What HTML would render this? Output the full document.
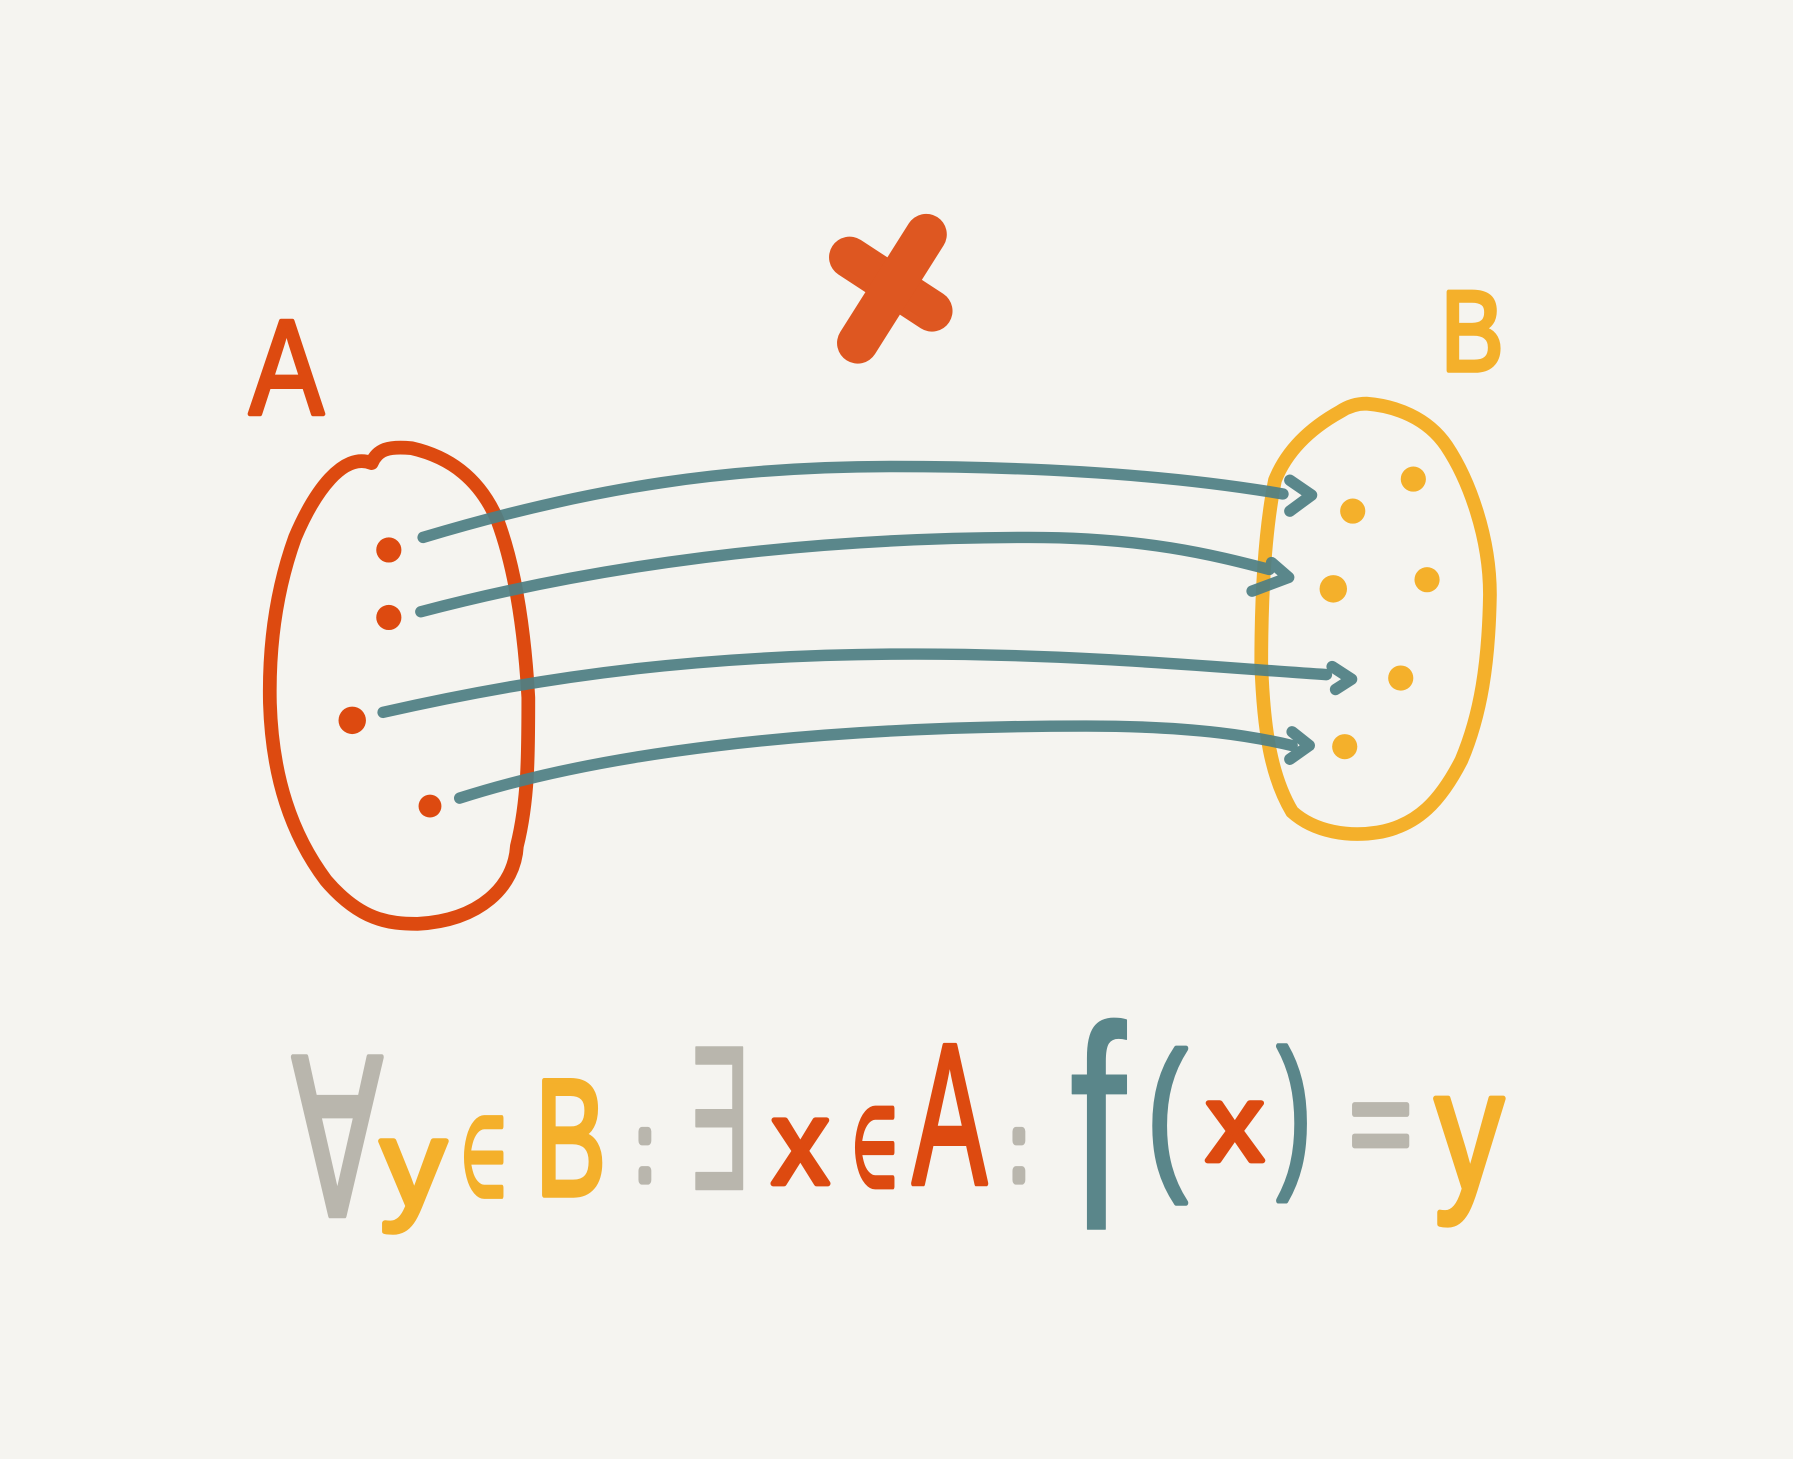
<!DOCTYPE html>
<html><head><meta charset="utf-8"><style>
html,body{margin:0;padding:0;background:#f5f4f0;}
svg{display:block;}
text{font-family:"Liberation Sans",sans-serif;stroke-linejoin:round;}
</style></head><body>
<svg width="1793" height="1459" viewBox="0 0 1568 1276" xmlns="http://www.w3.org/2000/svg">
<rect width="1568" height="1276" fill="#f5f4f0"/>
<g fill="none" stroke-linecap="round" stroke-linejoin="round">
<path d="M325,405 C300,395 275,430 258,470 C240,520 235,570 236,615 C238,680 255,730 285,770 C315,805 340,808 365,808 C420,805 450,775 452,740 C462,700 462,660 462,610 C458,540 448,490 435,455 C420,420 395,400 360,392 C340,390 330,393 325,405 Z" stroke="#dd4a10" stroke-width="12"/>
<path d="M1172,360 C1145,375 1125,395 1115,420 C1105,470 1103,530 1103,580 C1105,640 1112,680 1130,710 C1150,728 1180,732 1205,728 C1240,722 1260,700 1278,665 C1295,625 1302,580 1303,520 C1303,470 1285,420 1265,390 C1248,365 1220,355 1195,353 C1185,353 1178,356 1172,360 Z" stroke="#f4b02b" stroke-width="12"/>
</g>
<g fill="none" stroke="#4f7f84" stroke-width="10" stroke-linecap="round" stroke-linejoin="round" opacity="0.93">
<path d="M370,470 C520,425 640,408 780,408 C930,408 1040,418 1122,432"/>
<path d="M1128,420 L1147,433 L1128,447"/>
<path d="M368,535 C520,495 700,470 900,470 C1000,470 1060,485 1110,498"/>
<path d="M1112,492 L1127,505 L1095,517"/>
<path d="M335,623 C480,590 620,572 800,572 C950,572 1080,585 1160,590"/>
<path d="M1165,583 L1182,594 L1168,603"/>
<path d="M402,698 C520,660 700,635 950,635 C1050,635 1100,645 1130,652"/>
<path d="M1130,640 L1145,652 L1128,664"/>
</g>
<g fill="#dd4a10">
<circle cx="340" cy="481" r="11"/><circle cx="340" cy="540" r="11"/><circle cx="308" cy="630" r="12"/><circle cx="376" cy="705" r="10"/>
</g>
<g fill="#f4b02b">
<circle cx="1183" cy="447" r="11"/><circle cx="1236" cy="419" r="11"/><circle cx="1166" cy="515" r="12"/><circle cx="1248" cy="507" r="11"/><circle cx="1225" cy="593" r="11"/><circle cx="1176" cy="653" r="11"/>
</g>
<g stroke="#dd4a10" stroke-width="36" stroke-linecap="round" opacity="0.92">
<line x1="743" y1="225" x2="815" y2="272"/>
<line x1="810" y1="205" x2="750" y2="300"/>
</g>
<text x="218" y="362" font-size="118" fill="#dd4a10" stroke="#dd4a10" stroke-width="4" textLength="65" lengthAdjust="spacingAndGlyphs">A</text>
<text x="1260" y="324" font-size="100" fill="#f4b02b" stroke="#f4b02b" stroke-width="4" textLength="55" lengthAdjust="spacingAndGlyphs">B</text>
<g stroke-width="5">
<text x="255" y="1063" font-size="190" fill="#b9b6ad" stroke="#b9b6ad" textLength="80" lengthAdjust="spacingAndGlyphs">∀</text>
<text x="333" y="1055" font-size="108" fill="#f4b02b" stroke="#f4b02b" textLength="57" lengthAdjust="spacingAndGlyphs">y</text>
<text x="403" y="1045" font-size="95" fill="#f4b02b" stroke="#f4b02b" textLength="40" lengthAdjust="spacingAndGlyphs">∈</text>
<text x="468" y="1045" font-size="145" fill="#f4b02b" stroke="#f4b02b" textLength="62" lengthAdjust="spacingAndGlyphs">B</text>
<text x="556" y="1032" font-size="80" fill="#b9b6ad" stroke="#b9b6ad" stroke-width="8" textLength="16" lengthAdjust="spacingAndGlyphs">:</text>
<text x="600" y="1040" font-size="170" fill="#b9b6ad" stroke="#b9b6ad" stroke-width="2" textLength="55" lengthAdjust="spacingAndGlyphs">∃</text>
<text x="675" y="1035" font-size="105" fill="#dd4a10" stroke="#dd4a10" textLength="50" lengthAdjust="spacingAndGlyphs">x</text>
<text x="745" y="1037" font-size="95" fill="#dd4a10" stroke="#dd4a10" textLength="40" lengthAdjust="spacingAndGlyphs">∈</text>
<text x="798" y="1035" font-size="175" fill="#dd4a10" stroke="#dd4a10" textLength="65" lengthAdjust="spacingAndGlyphs">A</text>
<text x="883" y="1032" font-size="80" fill="#b9b6ad" stroke="#b9b6ad" stroke-width="8" textLength="16" lengthAdjust="spacingAndGlyphs">:</text>
<text x="935" y="1075" font-size="255" fill="#5a868a" stroke="#5a868a" stroke-width="1" textLength="50" lengthAdjust="spacingAndGlyphs">f</text>
<text x="1003" y="1022" font-size="145" fill="#5a868a" stroke="#5a868a" textLength="35" lengthAdjust="spacingAndGlyphs">(</text>
<text x="1055" y="1015" font-size="95" fill="#dd4a10" stroke="#dd4a10" textLength="50" lengthAdjust="spacingAndGlyphs">x</text>
<text x="1117" y="1020" font-size="145" fill="#5a868a" stroke="#5a868a" textLength="30" lengthAdjust="spacingAndGlyphs">)</text>
<text x="1180" y="1020" font-size="110" fill="#b9b6ad" stroke="#b9b6ad" textLength="55" lengthAdjust="spacingAndGlyphs">=</text>
<text x="1255" y="1040" font-size="150" fill="#f4b02b" stroke="#f4b02b" textLength="60" lengthAdjust="spacingAndGlyphs">y</text>
</g>
</svg>
</body></html>
